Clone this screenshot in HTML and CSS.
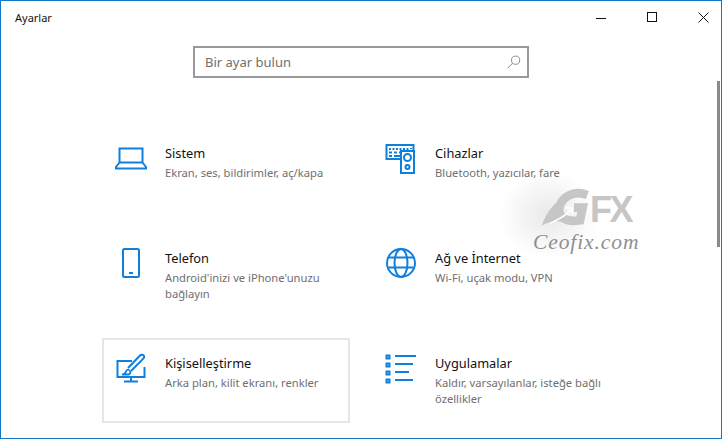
FILE: index.html
```html
<!DOCTYPE html>
<html lang="tr">
<head>
<meta charset="utf-8">
<title>Ayarlar</title>
<link rel="stylesheet" href="styles.css">
</head>
<body>
<div class="window">
  <header class="titlebar">
    <span class="title">Ayarlar</span>
    <div class="controls">
      <svg class="ctl" viewBox="0 0 46 30" width="46" height="30"><path d="M13 17.5h10" stroke="#111" fill="none"/></svg>
      <svg class="ctl" viewBox="0 0 46 30" width="46" height="30"><rect x="18.5" y="11.5" width="9" height="9" stroke="#111" fill="none"/></svg>
      <svg class="ctl" viewBox="0 0 46 30" width="46" height="30"><path d="M23.5 11.5l10 10M33.5 11.5l-10 10" stroke="#111" fill="none"/></svg>
    </div>
  </header>
  <div class="searchrow">
    <div class="search">
      <span class="placeholder">Bir ayar bulun</span>
      <svg viewBox="0 0 14 14" width="14" height="14"><circle cx="8.6" cy="5.2" r="4.1" fill="none" stroke="#8c8c8c"/><path d="M5.6 8.2L.8 13" stroke="#8c8c8c" fill="none"/></svg>
    </div>
  </div>
  <main class="grid">
    <a class="card">
      <svg class="icon" viewBox="0 0 32 32" width="32" height="32"><path d="M4.5 6.5h23v14h-23zM4.5 20.5L1 25v1.5h30V25l-3.500-4.500" fill="none" stroke="#0f7fdc" stroke-width="2"/></svg>
      <div class="text"><div class="name">Sistem</div><div class="desc">Ekran, ses, bildirimler, aç/kapa</div></div>
    </a>
    <a class="card">
      <svg class="icon" viewBox="0 0 32 32" width="32" height="32"><path d="M16 17H1.500V3h27v5" fill="none" stroke="#0f7fdc" stroke-width="2"/><path d="M4 6h2v2H4zM7.500 6h2v2h-2zM11 6h2v2h-2zM14.500 6h2v2h-2zM18 6h2v2h-2zM21.500 6h2v2h-2zM25 6h2v1h-2zM4 9.500h3v2H4zM9 9.500h3v2H9zM14 9.500h2v2h-2zM4 13h3v2H4zM9 13h7v2H9z" fill="#0f7fdc"/><rect x="16" y="9" width="13" height="22" fill="#fff" stroke="#0f7fdc" stroke-width="2"/><circle cx="22.500" cy="15.500" r="3.500" fill="none" stroke="#0f7fdc" stroke-width="2"/><circle cx="22.500" cy="25" r="2" fill="none" stroke="#0f7fdc" stroke-width="2"/></svg>
      <div class="text"><div class="name">Cihazlar</div><div class="desc">Bluetooth, yazıcılar, fare</div></div>
    </a>
    <a class="card">
      <svg class="icon" viewBox="0 0 32 32" width="32" height="32"><rect x="8" y="2" width="16" height="28" rx="1.500" fill="none" stroke="#0f7fdc" stroke-width="2"/><path d="M14 25h4v2h-4z" fill="#0f7fdc"/></svg>
      <div class="text"><div class="name">Telefon</div><div class="desc">Android'inizi ve iPhone'unuzu bağlayın</div></div>
    </a>
    <a class="card">
      <svg class="icon" viewBox="0 0 32 32" width="32" height="32"><g fill="none" stroke="#0f7fdc" stroke-width="2"><circle cx="16" cy="16" r="14"/><ellipse cx="16" cy="16" rx="6.500" ry="14"/><path d="M3.500 10.500h25M3.500 20.500h25"/></g></svg>
      <div class="text"><div class="name">Ağ ve İnternet</div><div class="desc">Wi-Fi, uçak modu, VPN</div></div>
    </a>
    <a class="card card-active">
      <svg class="icon" viewBox="0 0 32 32" width="32" height="32"><path d="M17 9H2.500v16h27V15M16 25v4M9 29.500h14" fill="none" stroke="#0f7fdc" stroke-width="2"/><path d="M7 22.500c3 0 3.500-1 4-3 .5-1.800 2-2.500 3.500-1.500 1.500 1 1 3.500-.5 4.500z" fill="none" stroke="#0f7fdc" stroke-width="1.800"/><path d="M13 16L25 3.500c1-1 2.500-1.200 3.500-.2s.8 2.300-.2 3.300L16 19" fill="#fff" stroke="#0f7fdc" stroke-width="2"/></svg>
      <div class="text"><div class="name">Kişiselleştirme</div><div class="desc">Arka plan, kilit ekranı, renkler</div></div>
    </a>
    <a class="card">
      <svg class="icon" viewBox="0 0 32 32" width="32" height="32"><g fill="none" stroke="#0f7fdc" stroke-width="2"><path d="M1.500 3.500h3v3h-3zM1.500 11.500h3v3h-3zM1.500 19.500h3v3h-3zM1.500 27.500h3v3h-3z"/><path d="M10 4h21M10 12h18M10 20h14M10 28h18"/></g></svg>
      <div class="text"><div class="name">Uygulamalar</div><div class="desc">Kaldır, varsayılanlar, isteğe bağlı özellikler</div></div>
    </a>
  </main>
  <div class="scrollthumb"></div>
  <div class="watermark">
    <svg class="wm-mark" viewBox="30 50 168 132" width="56" height="44">
      <path d="M172 74C130 58 95 80 88 112c-4 23 12 46 62 38l8-38h-26" fill="none" stroke="#c6c6c6" stroke-width="26"/>
      <path d="M35 166c15-41 35-66 60-81-15 30-15 55 5 70-25-5-45 0-65 11z" fill="#c6c6c6"/>
      <path d="M60 160c25-15 45-20 62-42M108 112l18 2 0 18" fill="none" stroke="#fff" stroke-width="5"/>
    </svg>
    <span class="wm-fx">FX</span>
    <span class="wm-site">Ceofix.com</span>
  </div>
</div>
</body>
</html>
```

FILE: styles.css
```css
* { box-sizing: border-box; }
html, body { margin: 0; height: 100%; background: #fff; overflow: hidden; }
body { font-family: "Noto Sans", "Open Sans", sans-serif; }
.window {
  position: relative;
  width: 722px;
  height: 439px;
  border: 1px solid #1279c9;
  overflow: hidden;
  background: #fff;
}
.titlebar { display: flex; justify-content: space-between; height: 30px; padding-left: 14px; }
.title { font-size: 11px; line-height: 34px; color: #111; }
.controls { display: flex; }
.ctl { display: block; }
.searchrow { display: flex; padding: 15px 0 0 192px; }
.search {
  width: 336px;
  height: 32px;
  border: 2px solid #999;
  display: flex;
  align-items: center;
  justify-content: space-between;
  padding: 0 6px 0 10px;
}
.placeholder { font-size: 13px; line-height: 26px; color: #707070; }
.grid {
  display: grid;
  grid-template-columns: 248px 248px;
  grid-auto-rows: 85px;
  column-gap: 22px;
  row-gap: 20px;
  padding: 50px 0 0 101px;
}
.card { display: flex; border: 2px solid transparent; padding: 10px 0 0 11px; }
.card-active { border-color: #e6e6e6; }
.icon { flex: none; margin-top: 2px; }
.text { margin-left: 18px; }
.name { font-size: 12.800px; line-height: 18px; color: #111; margin-top: 4px; }
.desc { font-size: 11.200px; line-height: 16px; color: #6f6f6f; margin-top: 3px; width: 182px; }
.scrollthumb { position: absolute; right: 1px; top: 80px; width: 3px; height: 166px; background: #8a8a8a; }
.watermark {
  position: absolute;
  left: 500px;
  top: 160px;
  width: 170px;
  height: 110px;
  background: radial-gradient(ellipse 50px 44px at 48px 54px, rgba(0,0,0,.09), rgba(0,0,0,0) 100%);
}
.wm-mark { position: absolute; left: 39px; top: 26px; }
.wm-fx {
  position: absolute;
  left: 89px;
  top: 31px;
  font: bold 36px/36px "Liberation Sans", sans-serif;
  letter-spacing: -2.500px;
  color: #c6c6c6;
}
.wm-site {
  position: absolute;
  left: 32px;
  top: 69px;
  font: italic 21.500px/24px "Liberation Serif", serif;
  letter-spacing: .9px;
  color: #8f8f8f;
  white-space: nowrap;
}
```
